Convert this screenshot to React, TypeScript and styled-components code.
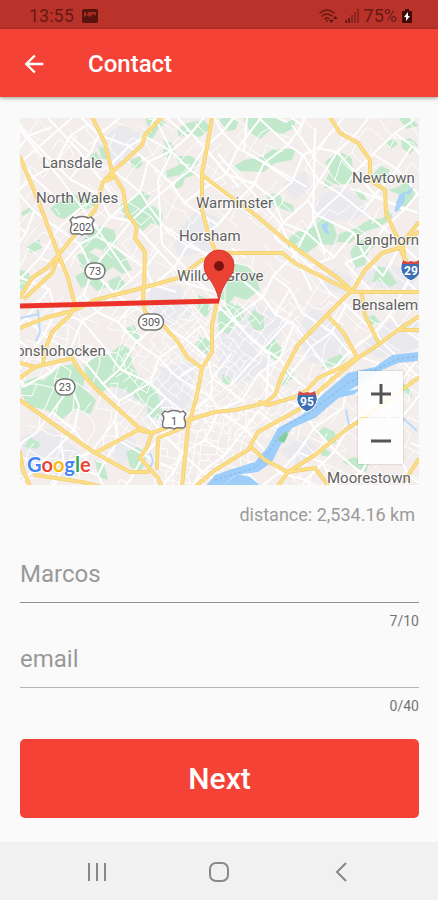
import React, { useState } from "react";
import styled, { createGlobalStyle } from "styled-components";

const GlobalStyle = createGlobalStyle`
  * { box-sizing: border-box; }
  body {
    margin: 0;
    background: #fafafa;
    font-family: Roboto, "Liberation Sans", sans-serif;
  }
  button, input { font: inherit; }
`;

const Screen = styled.div`
  display: flex;
  flex-direction: column;
  min-height: 100vh;
  background: #fafafa;
`;

const StatusBar = styled.div`
  display: flex;
  justify-content: space-between;
  align-items: center;
  padding: 2px 26px 0 29px;
  height: 29px;
  background: #b9332b;
  color: #6a1812;
  font-size: 18px;
  line-height: 24px;
`;

const StatusGroup = styled.div<{ $gap: number }>`
  display: flex;
  align-items: center;
  gap: ${(p) => p.$gap}px;
`;

const AppBar = styled.header`
  display: flex;
  align-items: center;
  gap: 40px;
  height: 68px;
  padding: 2px 20px 0;
  background: #f44336;
  color: #fff;
  box-shadow: 0 1px 4px rgba(0, 0, 0, 0.4);
`;

const IconButton = styled.button`
  display: grid;
  place-items: center;
  padding: 0;
  border: 0;
  background: none;
  color: inherit;
  cursor: pointer;
`;

const Title = styled.h1`
  margin: 0;
  font-size: 24px;
  line-height: 32px;
  font-weight: 500;
`;

const Main = styled.main`
  display: flex;
  flex-direction: column;
  flex: 1;
  padding: 21px 19px 23px 20px;
`;

const MapFrame = styled.section`
  position: relative;
  overflow: hidden;
`;

const MapDrawing = styled.svg`
  display: block;
  width: 100%;
  height: auto;
  font-family: Roboto, "Liberation Sans", sans-serif;
`;

const ZoomControls = styled.div`
  position: absolute;
  right: 16px;
  bottom: 21px;
  display: flex;
  flex-direction: column;
  gap: 1px;
  box-shadow: 0 0 2px rgba(0, 0, 0, 0.25);
`;

const ZoomButton = styled(IconButton)`
  width: 45px;
  height: 46px;
  background: rgba(255, 255, 255, 0.88);
  color: #555;
`;

const Distance = styled.p`
  margin: 18px 4px 31px 0;
  color: #9b9b9b;
  font-size: 18px;
  line-height: 24px;
  text-align: right;
`;

const Form = styled.form`
  display: flex;
  flex-direction: column;
`;

const Field = styled.div`
  display: flex;
  flex-direction: column;
  height: 85px;
`;

const TextInput = styled.input<{ $line: string }>`
  width: 100%;
  height: 45px;
  padding: 0 0 12px;
  border: 0;
  border-bottom: 1px solid ${(p) => p.$line};
  border-radius: 0;
  outline: 0;
  background: transparent;
  color: #999;
  font-size: 24px;
  line-height: 32px;
  &::placeholder { color: #999; opacity: 1; }
`;

const Counter = styled.span`
  margin-top: 8px;
  color: #757575;
  font-size: 14px;
  line-height: 20px;
  text-align: right;
`;

const NextButton = styled.button`
  height: 79px;
  margin-top: 11px;
  border: 0;
  border-radius: 5px;
  background: #f44336;
  color: #fff;
  font-size: 30px;
  font-weight: 500;
  cursor: pointer;
`;

const NavBar = styled.nav`
  display: flex;
  justify-content: space-around;
  align-items: center;
  height: 58px;
  padding: 2px 36px 0;
  background: #f1f1f1;
  color: #888;
`;

/* ---------- map data ---------- */

const parks = [
  "M99 146l10 4-1 10-7-2zM90 156l6-4 5 8-8 4zM22 212l10-6 2 5-12 5zM27 247l12-8 3 9-11 5z",
  "M50 208l12-8 8-6 14 2 8-2 8 8-9 6-15 3-12 8-8-3z",
  "M88 232l12-6 14 4 3 12-8 10-14-4-8 6-7-8zM77 254l14-1 10 6-6 12-14-4zM104 250l12-2 10 10 6 12-10 4-9-7-9 6-4-8z",
  "M120 205l10-6 12-8 8 5-5 8 10 3 8 8-2 11-10-3-8 8-8-8-10-4zM130 160l10-4 3 8-5 5-6-2z",
  "M143 134l7-8 8 3-5 9-9 1zM145 119l12-2 9 5-7 7-11-3zM163 140l9 3 3 10-7 6-6-6 4-7z",
  "M176 156l15 0 8 6-7 6 4 7-11 3-3 9-8 2 5-14-12 3-1-7 13-6zM177 129l10-6 17-3 7 8-11 9-12-3-9 4z",
  "M20 270l8 2 3 8-5 8-6 2zM75 276l13-6 12 5 7 12-10 4-7-7-9 4zM108 281l11-5 8 9-6 6-10-2z",
  "M243 118l34 0 7 5 12-4-2 9-12 6-12-4-10 9-9-6zM233 167l11-7 18-3 11-8 23 0-4 11-17 3-11 9-24-1z",
  "M219 119l10-2 10 5-4 8-9 1zM325 162l9-8 9-1 9 6 1 15-8 9-11 1-8-5 4-8zM324 180l8 5-7 4z",
  "M334 155h16l2 28-14 2-7-8z",
  "M373 174l8-8 9 4-2 9-10 2zM266 195l12-2 5 8 10 4 1 8-14-5-8-4zM352 187l10 4 5 10-7-2z",
  "M384 142l9-3 5 5-7 5zM399 118l14 0 5 8-12 3zM401 140l9-2 8 7-8 9-8-6z",
  "M288 239l9-7 14-5 9-10 12 4 5 14-4 10-14-1-12 9-10-6-9 2z",
  "M339 234l17-6 13-8 14-2 6-8 4 7-13 10-14 4-16 12-13-1zM388 190l10-3 10-6 7 11-4 11-11 8-7-5 8-11z",
  "M350 252l8-11 11-3 8 7-8 5-4 15-10 3zM378 266l9 3 10 14-7 4-9-6-9 1z",
  "M230 263l15 2 10 9 5 16-14 10-11-4-7 8-8-7 7-12-7-12z",
  "M218 312l10-10 14 5 2 11-10 6-5 10-10-3zM248 319l6-9 10 7 0 12-9 2zM264 347l10-8 9 11-7 11-8-6zM280 380l5-2 3 6-6 2zM222 374l8 4 1 8-8-3z",
  "M83 365l13-8 13-3 13-10 9 7 1 14 9 13 14 8 5 16-8 7-13-8-15-12-13-3-8 6-14-10z",
  "M22 382l15-5 6 4 17-15 17-2 8 11-2 13 13 12-5 14-18-4-12 10-15-10-17-4-8-12z",
  "M126 328l8-3 7 15-5 6zM147 403l9-4 8 9-6 11-10-3zM195 345l7-9 10 7-5 12zM198 295l8 3 5 12-6 8-7-9z",
  "M126 452l12-5 10 8-7 17-11-5zM95 461l9 3 4 16-9-3zM30 437l11 7-4 5-13-2z",
  "M286 369l7 2 1 9-8 1zM329 359l12-5 7 5-11 6-16 4zM316 434l8-7 11 5 1 12-9-3zM323 448l8 4-3 5-7-2zM342 462l12-5 15 6-3 9-13-5z",
  "M362 319l12-4 6 7-12 4zM396 379l13 8 4 11-10-8z",
];

const blocks = [
  "M95 145l26-21 19 10-6 19-21 15zM64 234l22-15 15 15-19 14zM172 238l26-29 20 9-5 32-35 7z",
  "M313 201l24-14 19 8 13 14-16 12-37-2zM283 184l22-13 6 17-17 13zM319 286l14-17 19 9-8 16z",
  "M105 372l24-9 21 21-16 17-20-7zM150 288l30-2 13 27-22 14-24-19z",
  "M297 327l18-22 28 29 7 17-22 14-21-4zM220 325l35-22 32 18-17 43-26 20-26-7z",
  "M160 367l35-4-6 49-32 17-16-17zM20 437l31-9 29 24-9 28-46-4zM105 445l27-8 8 14-20 14z",
  "M280 450l25-14 12 12-22 19zM362 345l27-24 29 2 0 25-41 10zM358 277l31-14 29 14-9 13-37-3z",
];

const highways = [
  "M92 117L105 143L112 172L123 190L127 213L137 227L135 238L145 252L144 287L143 297L145 312L163 325L178 342L187 357L202 368",
  "M162 117L145 135L142 145L127 159L112 172L103 182L95 210L65 247L48 267L32 278L20 297",
  "M58 257L52 273L25 298M103 182L112 178L112 172",
  "M20 157L38 200L58 253L68 278L75 305L70 315L52 332L47 345L43 362",
  "M212 117L208 142L202 173L202 210L208 233L215 250",
  "M202 175L235 200L258 217L285 240L315 262L338 278L353 292",
  "M20 328L45 318L75 310L95 300L142 288L178 278L202 260L228 253L282 253L295 263L328 280L353 292L418 292",
  "M330 117L340 133L358 143L370 160L370 180L385 190L386 213L397 237L402 253L415 277",
  "M418 223L405 240L402 247L382 253L365 270L353 290L342 300L325 317L298 345L282 375L275 395L265 403L235 410L215 412L195 418L182 422L152 433",
  "M20 378L35 367L72 358L78 368L95 388L138 427L152 433L147 447L140 458L158 478L162 487M20 363L35 367",
  "M20 400L55 425L95 453L130 472L148 472M95 453L138 430L152 433",
  "M217 302L212 325L212 352L202 368L197 395L188 428L182 487",
  "M182 428L158 438L157 468",
  "M418 317L398 330L378 345L358 358L335 377L318 392L298 410L258 432L248 450L215 470L196 486",
  "M358 357L342 367L318 378L307 390L295 397L268 405L260 402",
  "M327 315L343 332L357 357M362 295L365 315L378 342M418 330L398 330",
  "M252 448L265 460L288 472L315 468L327 484M278 486L288 472L315 455L348 428L358 422L418 378",
  "M20 452L23 470L30 486M35 475L82 482L102 487M418 460L404 482M418 232L403 244L406 276",
];

const river =
  "M205 487L215 475L235 468L255 462L267 448L278 428L302 415L322 395L348 373L375 367L392 355L418 352L418 361L398 363L382 370L358 385L342 395L315 418L292 428L282 442L272 462L258 472L235 475L222 487Z";

/* Local streets: a jittered, rotated lattice, reproducible from its seed. */
function streets(
  seed: number,
  box: [number, number, number, number],
  step: number,
  angle: number,
  density: number
): string {
  const noise = (i: number, j: number, k: number) => {
    const v = Math.sin(i * 127.1 + j * 311.7 + k * 74.7 + seed) * 43758.5453;
    return v - Math.floor(v);
  };
  const [x0, y0, x1, y1] = box;
  const cx = (x0 + x1) / 2;
  const cy = (y0 + y1) / 2;
  const n = Math.ceil(Math.hypot(x1 - x0, y1 - y0) / step / 2);
  const node = (i: number, j: number) => {
    const u = (i + (noise(i, j, 1) - 0.5) * 0.55) * step;
    const v = (j + (noise(i, j, 2) - 0.5) * 0.55) * step;
    return [
      Math.round(cx + u * Math.cos(angle) - v * Math.sin(angle)),
      Math.round(cy + u * Math.sin(angle) + v * Math.cos(angle)),
    ];
  };
  let d = "";
  for (let i = -n; i <= n; i++) {
    for (let j = -n; j <= n; j++) {
      const [x, y] = node(i, j);
      if (x < x0 || x > x1 || y < y0 || y > y1) continue;
      const a = node(i + 1, j);
      const b = node(i, j + 1);
      if (noise(i, j, 3) < density) d += `M${x} ${y}L${a[0]} ${a[1]}`;
      if (noise(i, j, 4) < density) d += `M${x} ${y}L${b[0]} ${b[1]}`;
    }
  }
  return d;
}

const majorStreets = [
  streets(3, [0, 100, 430, 500], 27, 0.72, 0.8),
  "M20 130L60 178L98 230L133 281M48 118L79 151L120 205M72 118L20 163M155 118L172 152L158 180L162 245M178 118L239 187M247 118L244 151L307 187M315 128L313 218L325 254M218 154L280 223L312 291M350 188L418 213M292 125L317 161",
  "M218 306L269 355L266 401M230 386L289 320M163 245L208 291M163 225L228 270",
];

const minorStreets = [
  streets(11, [20, 118, 200, 320], 13, 0.72, 0.42),
  streets(17, [200, 118, 418, 300], 14, 0.65, 0.42),
  streets(23, [125, 300, 300, 430], 8, 0.72, 0.72),
  streets(29, [20, 310, 130, 486], 13, 0.3, 0.55),
  streets(31, [155, 405, 250, 486], 8, 0.15, 0.8),
  streets(37, [290, 300, 418, 486], 12, 0.6, 0.55),
];

const places: [string, number, number][] = [
  ["Lansdale", 42, 168],
  ["North Wales", 36, 203],
  ["Newtown", 352, 183],
  ["Warminster", 196, 208],
  ["Horsham", 179, 241],
  ["Langhorn", 356, 245],
  ["Willow Grove", 177, 281],
  ["Bensalem", 352, 310],
  ["onshohocken", 16, 356],
  ["Moorestown", 327, 483],
];

function StateShield({ x, y, label }: { x: number; y: number; label: string }) {
  const w = label.length > 2 ? 25 : 20;
  return (
    <g>
      <rect x={x - w / 2} y={y - 8} width={w} height={16} rx={8} fill="#fff" stroke="#777" strokeWidth={1.5} />
      <text x={x} y={y + 4} textAnchor="middle" fontSize={11} fill="#555">{label}</text>
    </g>
  );
}

function RouteShield({ x, y, label }: { x: number; y: number; label: string }) {
  return (
    <g>
      <path
        transform={`translate(${x} ${y})`}
        d="M-9-9Q-6-7-4-9Q0-10 4-9Q6-7 9-9L12-6Q9-2 11 1Q13 8 8 8Q3 7 0 9Q-3 7-8 8Q-13 8-11 1Q-9-2-12-6Z"
        fill="#fff"
        stroke="#777"
        strokeWidth={1.5}
      />
      <text x={x} y={y + 5} textAnchor="middle" fontSize={11} fill="#555">{label}</text>
    </g>
  );
}

function Interstate({ x, y, label }: { x: number; y: number; label: string }) {
  return (
    <g>
      <g transform={`translate(${x} ${y})`}>
        <path d="M-8-10Q-4-7 0-9Q4-7 8-10Q13-1 7 6Q4 9 0 11Q-4 9-7 6Q-13-1-8-10Z" fill="#3c6fb5" stroke="#fff" strokeWidth={1} />
        <path d="M-8-10Q-4-7 0-9Q4-7 8-10L9-6H-9Z" fill="#d64a43" />
      </g>
      <text x={x} y={y + 5} textAnchor="middle" fontSize={12} fontWeight={700} fill="#fff">{label}</text>
    </g>
  );
}

const logoLetters: [string, string][] = [
  ["G", "#4285f4"],
  ["o", "#ea4335"],
  ["o", "#fbbc05"],
  ["g", "#4285f4"],
  ["l", "#34a853"],
  ["e", "#ea4335"],
];

function RouteMap() {
  return (
    <MapDrawing viewBox="20 118 399 367" role="img" aria-label="Map around Willow Grove">
      <rect x="20" y="118" width="399" height="367" fill="#f3edec" />
      <path d={blocks.join("")} fill="#e9e9ee" />
      <path d={parks.join("")} fill="#c2e9cc" />
      <g fill="none" stroke="#fff" strokeLinejoin="round">
        <path d={minorStreets.join("")} strokeWidth={1} />
        <path d={majorStreets.join("")} strokeWidth={2} />
      </g>
      <path d={river} fill="#9dcdf9" />
      <path d="M222 487L237 474L250 477L262 487ZM342 392l17-3-4 5-17 4z" fill="#9dcdf9" />
      <path d="M394 211l5-16 6-4 0 10-8 11zM405 193l9-7-5 9zM321 225l8-3-2 6 3 7-5-2z" fill="#a9d3f8" />
      <path d="M38 310l2 22-4 9M20 318l19-4M150 453l3 8-3 7M346 410l3 15M403 418l14 13" fill="none" stroke="#b9daf8" strokeWidth={2} />
      <path d="M277 440l9-9 2 4-4 8z" fill="#83cf99" />
      <path d="M215 480L257 467L272 447L283 427L307 414L350 382L398 359L418 356" fill="none" stroke="#82aeda" strokeWidth={1} strokeDasharray="2 3" />
      <g fill="none" strokeLinejoin="round" strokeLinecap="round">
        <path d={highways.join("")} stroke="#f5d27a" strokeWidth={4} />
        <path d={highways.join("")} stroke="#fddf86" strokeWidth={2} />
      </g>

      <g fontSize={15} fill="#606060" stroke="#fff" strokeWidth={2} strokeOpacity={0.8} paintOrder="stroke" strokeLinejoin="round">
        {places.map(([name, x, y]) => (
          <text key={name} x={x} y={y}>{name}</text>
        ))}
      </g>

      <RouteShield x={82} y={226} label="202" />
      <StateShield x={95} y={271} label="73" />
      <StateShield x={151} y={322} label="309" />
      <StateShield x={65} y={387} label="23" />
      <RouteShield x={174} y={420} label="1" />
      <Interstate x={307} y={401} label="95" />
      <Interstate x={411} y={270} label="29" />

      <path d="M20 306L219 301" stroke="#ec3329" strokeWidth={5} fill="none" />
      <path d="M219 301Q217 288 208 277Q204 272 204 265A15 15 0 0 1 234 265Q234 272 230 277Q221 288 219 301Z" fill="#ea4335" stroke="#d63a30" strokeWidth={1} />
      <circle cx="219" cy="266" r="5" fill="#7a130d" />

      <text x="27" y="472" fontSize={20} fontWeight={700} fontFamily="Lato, sans-serif" stroke="#fff" strokeWidth={2} paintOrder="stroke">
        {logoLetters.map(([letter, color], i) => (
          <tspan key={i} fill={color}>{letter}</tspan>
        ))}
      </text>
    </MapDrawing>
  );
}

function CountedField(props: { label: string; initial: string; max: number; line: string }) {
  const [value, setValue] = useState(props.initial);
  return (
    <Field>
      <TextInput
        aria-label={props.label}
        placeholder={props.label}
        value={value}
        maxLength={props.max}
        $line={props.line}
        onChange={(e) => setValue(e.target.value)}
      />
      <Counter>{value.length}/{props.max}</Counter>
    </Field>
  );
}

export default function App() {
  return (
    <>
      <GlobalStyle />
      <Screen>
        <StatusBar>
          <StatusGroup $gap={8}>
            <span>13:55</span>
            <svg width="16" height="14" viewBox="0 0 16 14" aria-hidden="true">
              <rect width="16" height="14" rx="2" fill="#5a120d" />
              <path d="M2 8V3H4V5H6V3H14V7L11 5L8 8L5 6Z" fill="#a52c25" />
            </svg>
          </StatusGroup>
          <StatusGroup $gap={5}>
            <svg width="20" height="16" viewBox="0 0 20 16" aria-hidden="true">
              <g fill="none" stroke="#6a1812" strokeWidth="1.5" strokeLinecap="round">
                <path d="M1 5Q8 -1 15 5M3 8Q8 4 13 8M6 11Q8 9 10 11" />
              </g>
              <circle cx="8" cy="13" r="1" fill="#6a1812" />
              <path d="M10 12h5l-3 3zM14 11l2-3 3 3z" fill="#5a120d" />
            </svg>
            <svg width="15" height="14" viewBox="0 0 15 14" aria-hidden="true">
              <path d="M1 11h2v3H1zM4 9h2v5H4z" fill="#6a1812" />
              <path d="M7 6h2v8H7zM10 3h2v11h-2zM13 0h2v14h-2z" fill="#8b241e" />
            </svg>
            <span>75%</span>
            <svg width="10" height="14" viewBox="0 0 10 14" aria-hidden="true">
              <path d="M3 0h4v2h2q1 0 1 1v10q0 1-1 1H1q-1 0-1-1V3q0-1 1-1h2z" fill="#3f0b08" />
              <path d="M6 3L2 8h2L4 12L8 7H6z" fill="#fff" />
            </svg>
          </StatusGroup>
        </StatusBar>

        <AppBar>
          <IconButton type="button" aria-label="Back">
            <svg width="28" height="28" viewBox="0 0 24 24" aria-hidden="true">
              <path d="M20 11H7.830l5.590-5.590L12 4l-8 8 8 8 1.410-1.410L7.830 13H20z" fill="currentColor" />
            </svg>
          </IconButton>
          <Title>Contact</Title>
        </AppBar>

        <Main>
          <MapFrame>
            <RouteMap />
            <ZoomControls>
              <ZoomButton type="button" aria-label="Zoom in">
                <svg width="20" height="20" viewBox="0 0 20 20" aria-hidden="true">
                  <path d="M0 10H20M10 0V20" stroke="currentColor" strokeWidth="3" />
                </svg>
              </ZoomButton>
              <ZoomButton type="button" aria-label="Zoom out">
                <svg width="20" height="20" viewBox="0 0 20 20" aria-hidden="true">
                  <path d="M0 10H20" stroke="currentColor" strokeWidth="3" />
                </svg>
              </ZoomButton>
            </ZoomControls>
          </MapFrame>
          <Distance>distance: 2,534.16 km</Distance>
          <Form onSubmit={(e) => e.preventDefault()}>
            <CountedField label="name" initial="Marcos " max={10} line="#8f8f8f" />
            <CountedField label="email" initial="" max={40} line="#b5b5b5" />
            <NextButton type="submit">Next</NextButton>
          </Form>
        </Main>

        <NavBar aria-label="System navigation">
          <IconButton type="button" aria-label="Recent apps">
            <svg width="20" height="20" viewBox="0 0 20 20" aria-hidden="true">
              <path d="M2 1V19M10 1V19M18 1V19" stroke="currentColor" strokeWidth="2" />
            </svg>
          </IconButton>
          <IconButton type="button" aria-label="Home">
            <svg width="20" height="20" viewBox="0 0 20 20" aria-hidden="true">
              <rect x="1" y="1" width="18" height="18" rx="6" fill="none" stroke="currentColor" strokeWidth="2" />
            </svg>
          </IconButton>
          <IconButton type="button" aria-label="Go back">
            <svg width="20" height="20" viewBox="0 0 20 20" aria-hidden="true">
              <path d="M15 1L6 10L15 19" fill="none" stroke="currentColor" strokeWidth="2" />
            </svg>
          </IconButton>
        </NavBar>
      </Screen>
    </>
  );
}
